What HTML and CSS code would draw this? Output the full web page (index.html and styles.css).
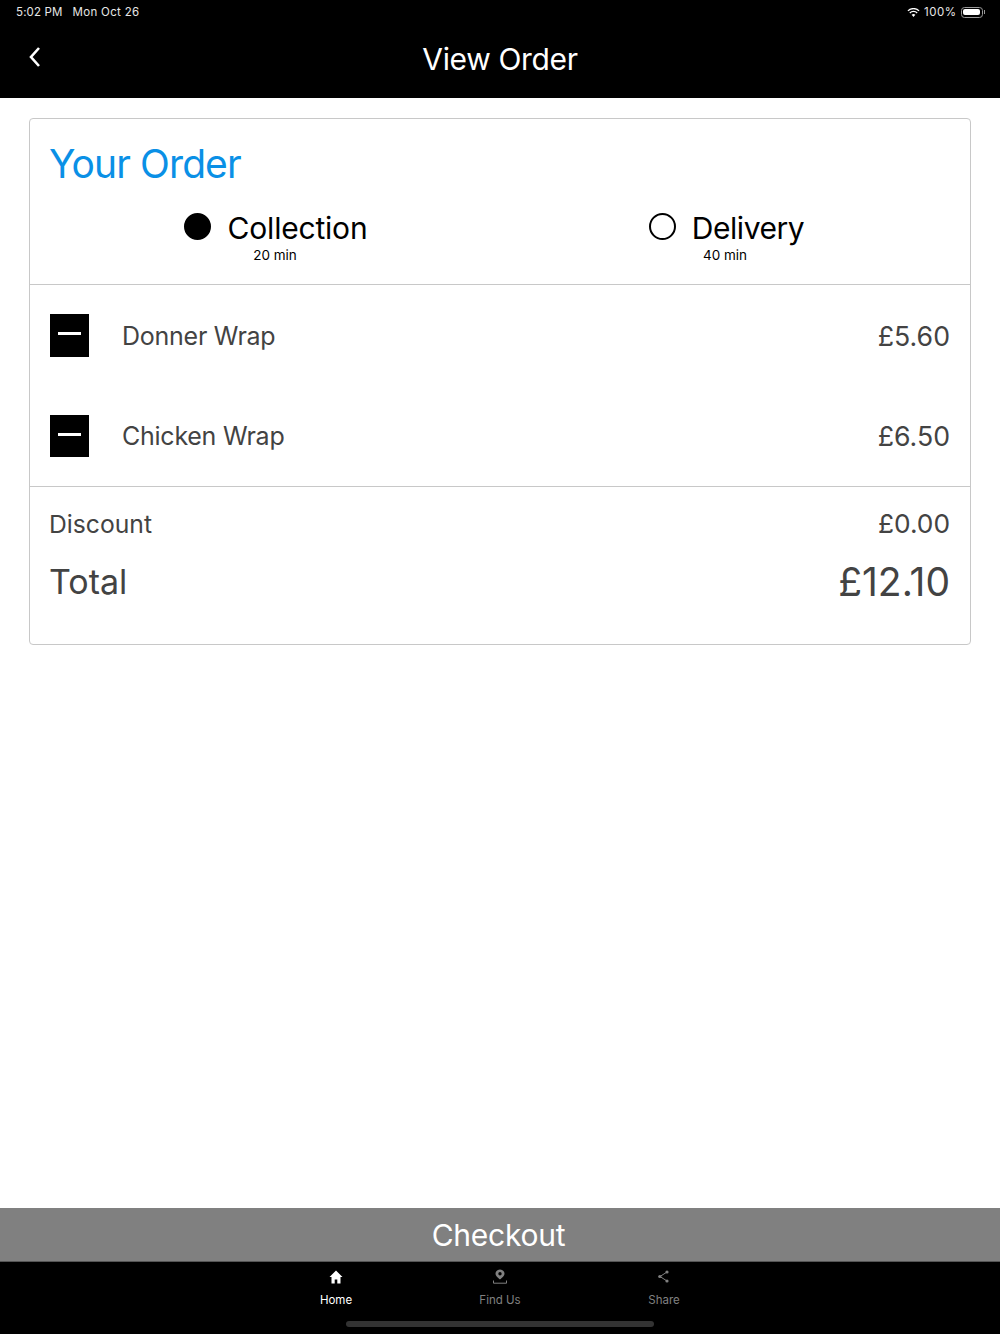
FILE: index.html
```html
<!DOCTYPE html>
<html lang="en">
  <head>
    <meta charset="UTF-8" />
    <meta name="viewport" content="width=device-width, initial-scale=1.0" />
    <title>View Order</title>
    <link rel="stylesheet" href="styles.css">
  </head>
  <body>
    <div class="app">
      <header class="top">
        <div class="status">
          <span class="status-time">5:02 PM</span>
          <span class="status-date">Mon Oct 26</span>
          <span class="status-right">
            <svg class="wifi" width="13" height="9" viewBox="0 0 14 10">
              <path d="M7 10 4.9 7.6a3 3 0 0 1 4.2 0z" fill="#fff"/>
              <path d="M2.9 5.5a5.8 5.8 0 0 1 8.2 0" fill="none" stroke="#fff" stroke-width="1.5"/>
              <path d="M.8 3.2a8.8 8.8 0 0 1 12.4 0" fill="none" stroke="#fff" stroke-width="1.5"/>
            </svg>
            <span class="status-level">100%</span>
            <span class="battery"><span class="battery-fill"></span></span>
            <span class="battery-tip"></span>
          </span>
        </div>
        <div class="navbar">
          <svg class="back" width="12" height="20" viewBox="0 0 12 20">
            <path d="M10 1 2 10l8 9" fill="none" stroke="#fff" stroke-width="2.6"/>
          </svg>
          <h1 class="navbar-title">View Order</h1>
        </div>
      </header>

      <main class="content">
        <section class="card">
          <div class="card-head">
            <h2 class="card-title">Your Order</h2>
            <div class="methods">
              <div class="method">
                <div class="method-row">
                  <span class="radio radio-on"></span>
                  <span class="method-name">Collection</span>
                </div>
                <div class="method-time">20 min</div>
              </div>
              <div class="method">
                <div class="method-row method-row-shift">
                  <span class="radio"></span>
                  <span class="method-name">Delivery</span>
                </div>
                <div class="method-time">40 min</div>
              </div>
            </div>
          </div>

          <div class="items">
            <div class="item">
              <span class="minus"><span class="minus-bar"></span></span>
              <span class="item-name">Donner Wrap</span>
              <span class="item-price">£5.60</span>
            </div>
            <div class="item">
              <span class="minus"><span class="minus-bar"></span></span>
              <span class="item-name">Chicken Wrap</span>
              <span class="item-price">£6.50</span>
            </div>
          </div>

          <div class="totals">
            <div class="line">
              <span>Discount</span>
              <span class="line-price">£0.00</span>
            </div>
            <div class="line line-total">
              <span>Total</span>
              <span class="line-price">£12.10</span>
            </div>
          </div>
        </section>
      </main>

      <button class="checkout">Checkout</button>

      <nav class="tabs">
        <div class="tab tab-active">
          <svg width="16" height="16" viewBox="0 0 16 16">
            <path d="M8 1.5 1.5 8H3.5v6.5h3.2v-4h2.6v4h3.2V8h2z" fill="#fff"/>
          </svg>
          <span>Home</span>
        </div>
        <div class="tab">
          <svg width="16" height="16" viewBox="0 0 16 16">
            <path d="M8 .5C5.500.5 3.500 2.400 3.500 4.800 3.500 7.500 8 10.500 8 10.500s4.500-3 4.500-5.700C12.500 2.400 10.500.5 8 .5zm0 6a1.700 1.700 0 1 1 0-3.400 1.700 1.700 0 0 1 0 3.400z" fill="#808080"/>
            <path d="M1.500 11.500v2.700h13v-2.700" fill="none" stroke="#808080" stroke-width="1"/>
          </svg>
          <span>Find Us</span>
        </div>
        <div class="tab">
          <svg width="16" height="16" viewBox="0 0 16 16">
            <path d="M11 3 4 7.500l7 4.500" fill="none" stroke="#808080" stroke-width="1"/>
            <circle cx="11" cy="3" r="1.600" fill="#808080"/>
            <circle cx="3.800" cy="7.500" r="1.600" fill="#808080"/>
            <circle cx="11" cy="12" r="1.600" fill="#808080"/>
          </svg>
          <span>Share</span>
        </div>
        <div class="home-bar"></div>
      </nav>
    </div>
  </body>
</html>
```

FILE: styles.css
```css
* {
  box-sizing: border-box;
}
body {
  margin: 0;
  font-family: Inter, "Liberation Sans", sans-serif;
  background: #fff;
}
h1,
h2 {
  margin: 0;
  font-weight: 400;
}
.app {
  display: flex;
  flex-direction: column;
  height: 1334px;
}

/* top bar */
.top {
  height: 98px;
  background: #000;
  color: #fff;
}
.status {
  display: flex;
  align-items: center;
  height: 24px;
  padding: 0 15px 0 16px;
  font-size: 11.500px;
  letter-spacing: 0.150px;
  color: #e6e6e6;
}
.status-date {
  margin-left: 10px;
  letter-spacing: 0.300px;
}
.status-right {
  display: flex;
  align-items: center;
  margin-left: auto;
}
.status-level {
  letter-spacing: 0.500px;
}
.wifi {
  margin-right: 4px;
}
.battery {
  display: block;
  width: 22px;
  height: 11px;
  margin-left: 4px;
  padding: 1.500px;
  border: 1px solid #999;
  border-radius: 3.500px;
}
.battery-fill {
  display: block;
  height: 100%;
  background: #fff;
  border-radius: 2px;
}
.battery-tip {
  width: 1.500px;
  height: 4px;
  margin-left: 1px;
  background: #999;
}
.navbar {
  position: relative;
  height: 74px;
  display: flex;
  align-items: center;
  justify-content: center;
}
.navbar-title {
  font-size: 30px;
  line-height: 70px;
  letter-spacing: -0.350px;
  margin-top: -4px;
}
.back {
  position: absolute;
  left: 29px;
  top: 23px;
}

/* order card */
.content {
  flex: 1;
  padding: 20px 29px 0;
}
.card {
  height: 527px;
  border: 1px solid #c8c8c8;
  border-radius: 4px;
  color: #434343;
}
.card-head {
  height: 166px;
  padding: 20px 20px 0;
  border-bottom: 1px solid #c8c8c8;
}
.card-title {
  font-size: 39px;
  line-height: 50px;
  letter-spacing: -0.900px;
  margin-left: -1px;
  color: #0a90e6;
}
.methods {
  display: flex;
  margin-top: 19px;
}
.method {
  width: 450px;
  display: flex;
  flex-direction: column;
  align-items: center;
  color: #000;
}
.method-row {
  display: flex;
  align-items: center;
  gap: 17px;
  height: 40px;
  padding-left: 1px;
}
.method-row-shift {
  padding-left: 3px;
}
.radio {
  width: 27px;
  height: 27px;
  border: 2.500px solid #000;
  border-radius: 50%;
  margin-top: -4px;
}
.radio-on {
  background: #000;
}
.method-name {
  font-size: 30px;
  letter-spacing: -0.200px;
}
.method-row-shift .method-name {
  margin-left: -1px;
  letter-spacing: -0.450px;
}
.method-time {
  font-size: 13.500px;
  line-height: 16px;
  margin-top: -1px;
}
.items {
  height: 202px;
  padding-top: 29px;
  border-bottom: 1px solid #c8c8c8;
}
.item {
  display: flex;
  align-items: center;
  height: 43px;
  margin-bottom: 57.500px;
  padding: 0 20px 0 19.500px;
  font-size: 25px;
}
.minus {
  display: flex;
  align-items: center;
  justify-content: center;
  width: 39px;
  height: 42.500px;
  background: #000;
}
.minus-bar {
  width: 23px;
  height: 3px;
  margin-top: -4px;
  background: #fff;
}
.item-name {
  margin-left: 33.500px;
  letter-spacing: -0.250px;
}
.item-price {
  margin-left: auto;
  font-size: 26.700px;
}
.totals {
  padding: 17px 20px 0 19px;
}
.line {
  display: flex;
  justify-content: space-between;
  font-size: 24.700px;
  line-height: 40px;
}
.line-price {
  font-size: 26.300px;
}
.line-total {
  margin-top: 13px;
  font-size: 34px;
  line-height: 50px;
}
.line-total .line-price {
  font-size: 39px;
}

/* bottom */
.checkout {
  display: block;
  width: 100%;
  height: 53px;
  padding: 0 3px 0 0;
  border: 0;
  background: #808080;
  color: #fff;
  font: inherit;
  font-size: 30px;
  letter-spacing: -0.250px;
}
.tabs {
  position: relative;
  height: 73px;
  display: flex;
  justify-content: center;
  background: #000;
  border-top: 1px solid #555;
}
.tab {
  width: 164px;
  display: flex;
  flex-direction: column;
  align-items: center;
  padding-top: 7px;
  font-size: 11.500px;
  color: #808080;
}
.tab span {
  margin-top: 8px;
}
.tab-active {
  color: #fff;
}
.home-bar {
  position: absolute;
  left: 346px;
  bottom: 7px;
  width: 308px;
  height: 6px;
  border-radius: 3px;
  background: #333;
}
```
